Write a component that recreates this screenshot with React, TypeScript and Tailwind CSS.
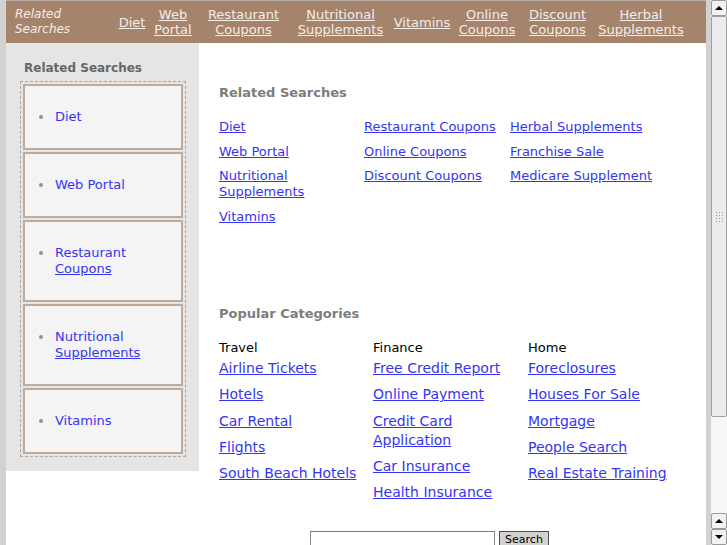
const navLinks: { label: string[]; w: string }[] = [
  { label: ["Diet"], w: "w-[34px]" },
  { label: ["Web", "Portal"], w: "w-[48px]" },
  { label: ["Restaurant", "Coupons"], w: "w-[93px]" },
  { label: ["Nutritional", "Supplements"], w: "w-[101px]" },
  { label: ["Vitamins"], w: "w-[62px]" },
  { label: ["Online", "Coupons"], w: "w-[68px]" },
  { label: ["Discount", "Coupons"], w: "w-[73px]" },
  { label: ["Herbal", "Supplements"], w: "w-[94px]" },
];

const sideLinks = [["Diet"], ["Web Portal"], ["Restaurant", "Coupons"], ["Nutritional", "Supplements"], ["Vitamins"]];

const related = [
  ["Diet", "Web Portal", "Nutritional Supplements", "Vitamins"],
  ["Restaurant Coupons", "Online Coupons", "Discount Coupons"],
  ["Herbal Supplements", "Franchise Sale", "Medicare Supplement"],
];

const popular = [
  { title: "Travel", links: ["Airline Tickets", "Hotels", "Car Rental", "Flights", "South Beach Hotels"] },
  { title: "Finance", links: ["Free Credit Report", "Online Payment", "Credit Card Application", "Car Insurance", "Health Insurance"] },
  { title: "Home", links: ["Foreclosures", "Houses For Sale", "Mortgage", "People Search", "Real Estate Training"] },
];

function ScrollBtn({ down }: { down?: boolean }) {
  return (
    <div className="h-[16px] w-[16px] flex items-center justify-center border border-[#9a9a9a] bg-[#f2f2f4] rounded-[2px]">
      <div
        className={
          down
            ? "w-0 h-0 border-l-[4px] border-r-[4px] border-t-[4px] border-l-transparent border-r-transparent border-t-black"
            : "w-0 h-0 border-l-[4px] border-r-[4px] border-b-[4px] border-l-transparent border-r-transparent border-b-black"
        }
      />
    </div>
  );
}

export default function App() {
  return (
    <div
      className="h-[545px] w-[727px] flex overflow-hidden bg-[#d2d2d2] pl-[6px]"
      style={{ fontFamily: '"DejaVu Sans", Verdana, sans-serif' }}
    >
      {/* page */}
      <div className="w-[700px] bg-white flex flex-col">
        {/* top nav */}
        <div className="h-[43px] bg-[#a6836b] border-t border-[#b8b0a8] flex items-center text-[13px] leading-[15px] text-[#f3eee9]">
          <div className="w-[109px] pl-[9px] italic text-[12px] text-[#f3eee9]">
            Related
            <br />
            Searches
          </div>
          {navLinks.map((l) => (
            <div key={l.label.join(" ")} className={`${l.w} text-center`}>
              <a href="#" className="underline">
                {l.label.map((p, i) => (
                  <span key={i}>
                    {i > 0 && <br />}
                    {p}
                  </span>
                ))}
              </a>
            </div>
          ))}
        </div>

        <div className="flex flex-1 min-h-0">
          {/* sidebar */}
          <div className="w-[193px] self-start bg-[#e5e5e5] pt-[18px] pl-[14px] pr-[13px] pb-[14px]">
            <h3 className="pl-[4px] text-[12px] leading-[15px] font-bold text-[#666666] mb-[5px]">Related Searches</h3>
            <div className="border border-dashed border-[#a8a8a8] p-[2px] flex flex-col gap-[2px]">
              {sideLinks.map((s) => (
                <div key={s.join(" ")} className="border-2 border-[#c2aa98] bg-[#f4f4f4] py-[23px] pl-[14px] flex items-start text-[13px] leading-4">
                  <span className="mt-[6px] w-[4px] h-[4px] rounded-full bg-[#a88c76] shrink-0" />
                  <a href="#" className="ml-[12px] text-[#3535f0]">
                    {s.map((p, i) => (
                      <span key={i} className={s.length > 1 && i === s.length - 1 ? "underline" : ""}>
                        {i > 0 && <br />}
                        {p}
                      </span>
                    ))}
                  </a>
                </div>
              ))}
            </div>
          </div>

          {/* main */}
          <div className="flex-1 pl-[20px] pt-[42px] flex flex-col">
            <h2 className="text-[13px] leading-4 font-bold text-[#7d7d7d]">Related Searches</h2>
            <div className="grid grid-cols-[145px_146px_auto] mt-[18px] text-[13px] leading-4">
              {related.map((col, ci) => (
                <ul key={ci} className="flex flex-col gap-[8.5px]">
                  {col.map((t) => (
                    <li key={t} className={t === "Nutritional Supplements" ? "w-[100px]" : ""}>
                      <a href="#" className="text-[#3535f0] underline">
                        {t}
                      </a>
                    </li>
                  ))}
                </ul>
              ))}
            </div>

            <h2 className="mt-[81px] text-[13px] leading-4 font-bold text-[#7d7d7d]">Popular Categories</h2>
            <div className="grid grid-cols-[154px_155px_auto] mt-[18px]">
              {popular.map((col) => (
                <div key={col.title}>
                  <div className="text-[13px] leading-4 text-black">{col.title}</div>
                  <ul className="mt-[3.5px] flex flex-col gap-[7.3px] text-[14px] leading-[19px]">
                    {col.links.map((t) => (
                      <li key={t} className={t === "Credit Card Application" ? "w-[110px]" : ""}>
                        <a href="#" className="text-[#3535f0] underline">
                          {t}
                        </a>
                      </li>
                    ))}
                  </ul>
                </div>
              ))}
            </div>

            <form className="mt-[29px] pl-[91px] flex items-start gap-[4px]" onSubmit={(e) => e.preventDefault()}>
              <input className="w-[185px] h-[22px] border border-[#8a8a8a] border-t-[#7a7a7a] bg-white" />
              <button className="w-[50px] h-[18px] border border-[#505050] bg-[#d4d2ce] text-[11px] leading-[14px] text-black">
                Search
              </button>
            </form>
          </div>
        </div>
      </div>

      {/* scrollbar */}
      <div className="ml-[5px] w-[16px] flex flex-col bg-[#f0f0f2]">
        <ScrollBtn />
        <div className="h-[401px] border border-[#a0a0a0] rounded-[2px] bg-[#ececf0] flex items-center justify-center">
          <div className="grid grid-cols-3 gap-[2px]">
            {Array.from({ length: 12 }).map((_, i) => (
              <div key={i} className="w-[1px] h-[1px] bg-[#9a9aa0]" />
            ))}
          </div>
        </div>
        <div className="flex-1 bg-[#f6f6f8]" />
        <ScrollBtn />
        <ScrollBtn down />
      </div>
    </div>
  );
}
